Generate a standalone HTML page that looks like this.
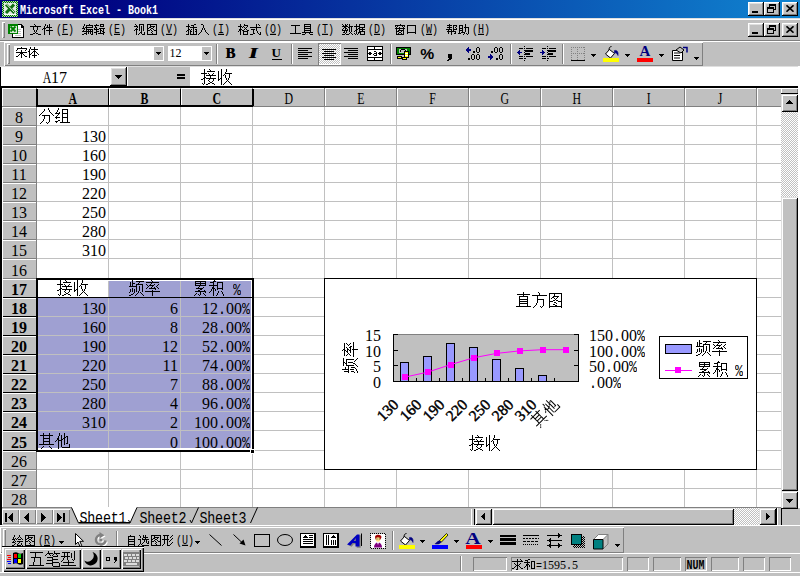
<!DOCTYPE html><html lang="zh"><head><meta charset="utf-8"><title>Microsoft Excel - Book1</title><style>
*{box-sizing:border-box}
html,body{margin:0;padding:0}
body{width:800px;height:576px;overflow:hidden;background:#c0c0c0;position:relative;font-family:"Liberation Sans",sans-serif;color:#000}
div,svg{position:absolute;display:block}
i{font-style:normal}
.n16{font:16px/16px "Liberation Serif",serif;white-space:pre}
.n16 .mc{display:inline-block;width:8px;text-align:center;font:13.333px/16px "Liberation Mono",monospace;transform:scaleY(1.25);transform-origin:50% 78%}
.n16 .sp{display:inline-block;width:8px}
.n12{font:12px/12px "Liberation Serif",serif;white-space:pre}
.n12 .mc{display:inline-block;width:6px;text-align:center;font:10px/12px "Liberation Mono",monospace;transform:scaleY(1.3);transform-origin:50% 78%}
.m16{font:13.333px/16px "Liberation Mono",monospace;transform:scaleY(1.25);transform-origin:0 0;white-space:pre}
.m12{font:10px/12px "Liberation Mono",monospace;transform:scaleY(1.2);transform-origin:0 0;white-space:pre}
.b{font-weight:bold}
.sq{display:inline-block;transform:scaleX(.74)}
.r{text-align:right}.c{text-align:center}
.btn{background:#c0c0c0;box-shadow:inset -1px -1px #000,inset 1px 1px #fff,inset -2px -2px #808080,inset 2px 2px #dfdfdf}
.sb{background:#c0c0c0;box-shadow:inset -1px -1px #000,inset 1px 1px #dfdfdf,inset -2px -2px #808080,inset 2px 2px #fff}
.dith{background:repeating-conic-gradient(#fff 0 25%,#c0c0c0 0 50%) 0 0/2px 2px}
.sunk{box-shadow:inset 1px 1px #808080,inset -1px -1px #fff}
.hl{background:#c0c0c0}
.grip{width:3px;background:#c0c0c0;box-shadow:inset 1px 1px #fff,inset -1px -1px #808080}
.sep{width:2px;background:#808080;border-right:1px solid #fff}
.hd{background:#c0c0c0;box-shadow:inset 1px 1px #fff}
</style></head><body><div style="left:0px;top:0px;width:800px;height:18px;background:linear-gradient(90deg,#000080 0%,#000080 10%,#1084d0 100%)"></div><div class="m12 b" style="left:20px;top:4px;color:#fff;transform:scaleY(1.3)">Microsoft Excel - Book1</div><svg style="left:2px;top:1px;" width="16" height="16" viewBox="0 0 16 16" shape-rendering="crispEdges"><defs><pattern id="gd" width="2" height="2" patternUnits="userSpaceOnUse"><rect width="2" height="2" fill="#b0dcb0"/><rect width="1" height="1" fill="#007000"/><rect x="1" y="1" width="1" height="1" fill="#007000"/></pattern></defs><rect width="16" height="16" fill="url(#gd)"/><rect x="2" y="2" width="12" height="11" fill="#e4ece4"/><rect x="2" y="13" width="12" height="1" fill="#fff"/><g shape-rendering="auto"><path d="M4 3.500l8.500 8.500M12 3.500l-8 8.500" stroke="#107010" stroke-width="3" fill="none"/><path d="M4.500 3l8 8.500" stroke="#fff" stroke-width=".9"/></g></svg><div class="btn" style="left:748px;top:2px;width:16px;height:14px;"></div><div class="btn" style="left:764px;top:2px;width:16px;height:14px;"></div><div class="btn" style="left:782px;top:2px;width:16px;height:14px;"></div><div style="left:752px;top:11px;width:6px;height:2px;background:#000"></div><svg style="left:767px;top:4px" width="10" height="10" shape-rendering="crispEdges"><path fill="none" stroke="#000" d="M2.5 2.5V.5h6v5h-2M.5 3.5h6v5h-6z"/><path d="M2 0h7v2H2zM0 3h7v2H0z" fill="#000"/></svg><svg style="left:786px;top:5px" width="8" height="7"><path stroke="#000" stroke-width="1.6" d="M.5 .3l7 6.4M7.5 .3l-7 6.4"/></svg><div style="left:0px;top:18px;width:800px;height:1px;background:#dfdfdf"></div><div style="left:0px;top:19px;width:800px;height:1px;background:#fff"></div><div style="left:0px;top:40px;width:800px;height:1px;background:#808080"></div><div style="left:0px;top:41px;width:800px;height:1px;background:#fff"></div><div class="grip" style="left:2px;top:22px;width:3px;height:16px;"></div><svg style="left:8px;top:23px;" width="17" height="16" viewBox="0 0 17 16" shape-rendering="crispEdges"><path d="M4 1h9l3 3v11h-12z" fill="#000"/><path d="M4.500 1.500h8v3h2.500v9.500h-10.500z" fill="#fff"/><path d="M12.500 1.500l2.500 3" stroke="#000" fill="none"/><path fill="#c0c0c0" d="M10 6h3v1h-3zM10 8h3v1h-3zM10 10h3v1h-3zM7 12h6v1h-6z"/><rect x="0" y="1" width="10" height="10" fill="#008000"/><rect x="1.500" y="2.500" width="7" height="7" fill="#d8e8d8"/><g shape-rendering="auto"><path d="M2.500 3.500l5 5M7.500 3.500l-5 5" stroke="#008000" stroke-width="1.800" fill="none"/></g></svg><svg role="img" aria-label="文件" style="left:30px;top:24px;" width="24" height="14" viewBox="0 0 24 14" shape-rendering="crispEdges"><title>文件</title><path fill="#000" d="M4 0h1v1h-1zM5 1h1v1h-1zM0 2h11v1h-11zM3 3h1v3h-1zM7 3h1v3h-1zM4 6h1v2h-1zM6 6h1v2h-1zM5 8h1v1h-1zM3 9h2v1h-2zM6 9h2v1h-2zM0 10h3v1h-3zM8 10h3v1h-3zM15 0h1v2h-1zM19 0h1v3h-1zM17 1h1v2h-1zM14 2h1v2h-1zM16 3h6v1h-6zM13 4h3v1h-3zM19 4h1v2h-1zM12 5h1v1h-1zM14 5h1v6h-1zM16 6h7v1h-7zM19 7h1v4h-1z"/></svg><div class="m12" style="left:56px;top:23px">(<u>F</u>)</div><svg role="img" aria-label="编辑" style="left:82px;top:24px;" width="24" height="14" viewBox="0 0 24 14" shape-rendering="crispEdges"><title>编辑</title><path fill="#000" d="M2 0h1v2h-1zM7 0h1v1h-1zM4 1h7v1h-7zM1 2h1v2h-1zM4 2h1v1h-1zM10 2h1v1h-1zM3 3h8v1h-8zM0 4h3v1h-3zM4 4h1v1h-1zM2 5h1v1h-1zM4 5h7v1h-7zM1 6h1v1h-1zM4 6h1v1h-1zM6 6h1v1h-1zM8 6h1v1h-1zM10 6h1v1h-1zM0 7h11v1h-11zM4 8h1v1h-1zM6 8h1v2h-1zM8 8h1v2h-1zM10 8h1v2h-1zM2 9h3v1h-3zM0 10h2v1h-2zM4 10h1v1h-1zM9 10h2v1h-2zM14 0h1v1h-1zM18 0h4v1h-4zM12 1h5v1h-5zM18 1h1v1h-1zM21 1h1v1h-1zM13 2h1v1h-1zM18 2h4v1h-4zM13 3h2v1h-2zM12 4h1v1h-1zM14 4h1v1h-1zM17 4h6v1h-6zM12 5h5v1h-5zM18 5h1v1h-1zM21 5h1v2h-1zM14 6h1v1h-1zM18 6h2v1h-2zM14 7h3v1h-3zM18 7h1v2h-1zM20 7h2v1h-2zM12 8h3v1h-3zM21 8h2v1h-2zM14 9h1v2h-1zM16 9h6v1h-6zM21 10h1v1h-1z"/></svg><div class="m12" style="left:108px;top:23px">(<u>E</u>)</div><svg role="img" aria-label="视图" style="left:134px;top:24px;" width="24" height="14" viewBox="0 0 24 14" shape-rendering="crispEdges"><title>视图</title><path fill="#000" d="M1 0h1v1h-1zM5 0h5v1h-5zM2 1h1v1h-1zM5 1h1v6h-1zM9 1h1v6h-1zM0 2h4v1h-4zM7 2h1v6h-1zM3 3h1v1h-1zM2 4h1v1h-1zM1 5h3v1h-3zM0 6h1v1h-1zM2 6h1v5h-1zM6 8h2v1h-2zM10 8h1v2h-1zM5 9h1v1h-1zM7 9h1v1h-1zM4 10h1v1h-1zM8 10h3v1h-3zM13 0h10v1h-10zM13 1h1v3h-1zM16 1h1v1h-1zM22 1h1v5h-1zM16 2h5v1h-5zM15 3h2v1h-2zM19 3h1v1h-1zM13 4h2v1h-2zM17 4h2v1h-2zM13 5h1v1h-1zM16 5h1v1h-1zM19 5h1v1h-1zM13 6h3v1h-3zM17 6h1v1h-1zM20 6h3v1h-3zM13 7h1v3h-1zM18 7h1v1h-1zM22 7h1v3h-1zM17 8h1v1h-1zM18 9h1v1h-1zM13 10h10v1h-10z"/></svg><div class="m12" style="left:160px;top:23px">(<u>V</u>)</div><svg role="img" aria-label="插入" style="left:186px;top:24px;" width="24" height="14" viewBox="0 0 24 14" shape-rendering="crispEdges"><title>插入</title><path fill="#000" d="M2 0h1v2h-1zM8 0h2v1h-2zM5 1h3v1h-3zM0 2h4v1h-4zM7 2h1v1h-1zM2 3h1v2h-1zM4 3h7v1h-7zM7 4h1v6h-1zM2 5h2v1h-2zM5 5h1v1h-1zM9 5h2v1h-2zM1 6h2v1h-2zM4 6h1v1h-1zM10 6h1v1h-1zM0 7h1v1h-1zM2 7h1v3h-1zM4 7h2v1h-2zM9 7h2v1h-2zM4 8h1v2h-1zM10 8h1v2h-1zM0 10h3v1h-3zM4 10h7v1h-7zM15 0h2v1h-2zM17 1h1v3h-1zM16 4h1v2h-1zM18 4h1v2h-1zM15 6h1v2h-1zM19 6h1v2h-1zM14 8h1v1h-1zM20 8h1v1h-1zM13 9h1v1h-1zM21 9h1v1h-1zM12 10h1v1h-1zM22 10h1v1h-1z"/></svg><div class="m12" style="left:212px;top:23px">(<u>I</u>)</div><svg role="img" aria-label="格式" style="left:238px;top:24px;" width="24" height="14" viewBox="0 0 24 14" shape-rendering="crispEdges"><title>格式</title><path fill="#000" d="M2 0h1v2h-1zM6 0h1v1h-1zM6 1h4v1h-4zM0 2h4v1h-4zM5 2h1v1h-1zM9 2h1v1h-1zM2 3h1v2h-1zM4 3h1v1h-1zM6 3h1v1h-1zM8 3h1v1h-1zM7 4h1v1h-1zM1 5h3v1h-3zM6 5h1v1h-1zM8 5h1v1h-1zM1 6h2v1h-2zM4 6h2v1h-2zM9 6h2v1h-2zM0 7h1v1h-1zM2 7h1v4h-1zM5 7h5v1h-5zM5 8h1v2h-1zM9 8h1v2h-1zM5 10h5v1h-5zM18 0h1v3h-1zM20 0h1v1h-1zM21 1h1v1h-1zM12 3h11v1h-11zM18 4h1v3h-1zM13 5h4v1h-4zM15 6h1v3h-1zM19 7h1v2h-1zM22 8h1v2h-1zM15 9h2v1h-2zM20 9h1v1h-1zM12 10h3v1h-3zM21 10h2v1h-2z"/></svg><div class="m12" style="left:264px;top:23px">(<u>O</u>)</div><svg role="img" aria-label="工具" style="left:290px;top:24px;" width="24" height="14" viewBox="0 0 24 14" shape-rendering="crispEdges"><title>工具</title><path fill="#000" d="M1 1h9v1h-9zM5 2h1v7h-1zM0 9h11v1h-11zM14 0h7v1h-7zM14 1h1v1h-1zM20 1h1v1h-1zM14 2h7v1h-7zM14 3h1v1h-1zM20 3h1v1h-1zM14 4h7v1h-7zM14 5h1v1h-1zM20 5h1v1h-1zM14 6h7v1h-7zM14 7h1v1h-1zM20 7h1v1h-1zM12 8h11v1h-11zM15 9h1v1h-1zM19 9h1v1h-1zM12 10h3v1h-3zM20 10h3v1h-3z"/></svg><div class="m12" style="left:316px;top:23px">(<u>T</u>)</div><svg role="img" aria-label="数据" style="left:342px;top:24px;" width="24" height="14" viewBox="0 0 24 14" shape-rendering="crispEdges"><title>数据</title><path fill="#000" d="M0 0h1v1h-1zM3 0h1v1h-1zM5 0h1v1h-1zM7 0h1v2h-1zM1 1h1v1h-1zM3 1h2v1h-2zM0 2h6v1h-6zM7 2h4v1h-4zM2 3h2v1h-2zM6 3h2v1h-2zM9 3h1v5h-1zM1 4h1v1h-1zM3 4h2v1h-2zM7 4h1v4h-1zM0 5h1v1h-1zM3 5h1v1h-1zM5 5h1v1h-1zM0 6h6v1h-6zM2 7h1v1h-1zM4 7h1v2h-1zM1 8h2v1h-2zM8 8h1v1h-1zM3 9h1v1h-1zM7 9h1v1h-1zM9 9h1v1h-1zM0 10h3v1h-3zM4 10h3v1h-3zM10 10h1v1h-1zM14 0h1v2h-1zM17 0h6v1h-6zM17 1h1v1h-1zM22 1h1v2h-1zM12 2h6v1h-6zM14 3h1v2h-1zM17 3h6v1h-6zM16 4h2v1h-2zM20 4h1v1h-1zM14 5h2v1h-2zM17 5h6v1h-6zM13 6h2v1h-2zM17 6h1v1h-1zM20 6h1v1h-1zM12 7h1v1h-1zM14 7h1v3h-1zM17 7h6v1h-6zM16 8h3v1h-3zM22 8h1v2h-1zM12 9h1v1h-1zM16 9h1v1h-1zM18 9h1v1h-1zM13 10h1v1h-1zM15 10h1v1h-1zM18 10h5v1h-5z"/></svg><div class="m12" style="left:368px;top:23px">(<u>D</u>)</div><svg role="img" aria-label="窗口" style="left:394px;top:24px;" width="24" height="14" viewBox="0 0 24 14" shape-rendering="crispEdges"><title>窗口</title><path fill="#000" d="M6 0h1v1h-1zM1 1h10v1h-10zM1 2h1v1h-1zM3 2h1v1h-1zM8 2h1v1h-1zM10 2h1v1h-1zM2 3h1v1h-1zM5 3h1v1h-1zM9 3h1v1h-1zM1 4h10v1h-10zM2 5h1v2h-1zM5 5h1v1h-1zM9 5h1v1h-1zM4 6h6v1h-6zM2 7h3v1h-3zM7 7h1v1h-1zM9 7h1v3h-1zM2 8h1v2h-1zM5 8h2v1h-2zM4 9h1v1h-1zM7 9h1v1h-1zM2 10h8v1h-8zM13 1h9v1h-9zM13 2h1v6h-1zM21 2h1v6h-1zM13 8h9v1h-9zM13 9h1v1h-1zM21 9h1v1h-1z"/></svg><div class="m12" style="left:420px;top:23px">(<u>W</u>)</div><svg role="img" aria-label="帮助" style="left:446px;top:24px;" width="24" height="14" viewBox="0 0 24 14" shape-rendering="crispEdges"><title>帮助</title><path fill="#000" d="M3 0h1v1h-1zM1 1h5v1h-5zM7 1h4v1h-4zM3 2h1v1h-1zM7 2h1v3h-1zM10 2h1v1h-1zM1 3h5v1h-5zM9 3h1v1h-1zM3 4h1v1h-1zM10 4h1v1h-1zM0 5h6v1h-6zM7 5h4v1h-4zM2 6h1v1h-1zM5 6h1v1h-1zM7 6h1v1h-1zM1 7h9v1h-9zM2 8h1v2h-1zM5 8h1v3h-1zM9 8h1v1h-1zM8 9h2v1h-2zM19 0h1v3h-1zM13 1h4v1h-4zM13 2h1v2h-1zM16 2h1v2h-1zM18 3h5v1h-5zM13 4h4v1h-4zM19 4h1v4h-1zM22 4h1v6h-1zM13 5h1v1h-1zM16 5h1v1h-1zM13 6h4v1h-4zM13 7h1v2h-1zM16 7h1v1h-1zM15 8h4v1h-4zM12 9h3v1h-3zM18 9h1v1h-1zM20 9h1v1h-1zM17 10h1v1h-1zM21 10h1v1h-1z"/></svg><div class="m12" style="left:472px;top:23px">(<u>H</u>)</div><div class="btn" style="left:748px;top:23px;width:16px;height:14px;"></div><div class="btn" style="left:764px;top:23px;width:16px;height:14px;"></div><div class="btn" style="left:782px;top:23px;width:16px;height:14px;"></div><div style="left:752px;top:32px;width:6px;height:2px;background:#000"></div><svg style="left:767px;top:25px" width="10" height="10" shape-rendering="crispEdges"><path fill="none" stroke="#000" d="M2.5 2.5V.5h6v5h-2M.5 3.5h6v5h-6z"/><path d="M2 0h7v2H2zM0 3h7v2H0z" fill="#000"/></svg><svg style="left:786px;top:26px" width="8" height="7"><path stroke="#000" stroke-width="1.6" d="M.5 .3l7 6.4M7.5 .3l-7 6.4"/></svg><div style="left:4px;top:42px;width:699px;height:24px;background:#c0c0c0;box-shadow:inset 1px 1px #fff,inset -1px -1px #808080"></div><div class="grip" style="left:7px;top:44px;width:3px;height:20px;"></div><div style="left:14px;top:46px;width:150px;height:15px;background:#fff"></div><div style="left:154px;top:47px;width:9px;height:13px;background:#c0c0c0"></div><svg style="left:156px;top:52px;" width="5" height="3" viewBox="0 0 5 3" shape-rendering="crispEdges"><path fill="#000" d="M0 0h5v1h-5zM1 1h3v1h-3zM2 2h1v1h-1z"/></svg><svg role="img" aria-label="宋体" style="left:16px;top:47px;" width="24" height="14" viewBox="0 0 24 14" shape-rendering="crispEdges"><title>宋体</title><path fill="#000" d="M5 0h1v1h-1zM1 1h10v1h-10zM1 2h1v1h-1zM10 2h1v1h-1zM0 3h1v1h-1zM5 3h1v2h-1zM9 3h1v1h-1zM0 5h11v1h-11zM4 6h3v1h-3zM3 7h1v1h-1zM5 7h1v4h-1zM7 7h1v1h-1zM2 8h1v1h-1zM8 8h1v1h-1zM0 9h2v1h-2zM9 9h2v1h-2zM14 0h1v2h-1zM18 0h1v2h-1zM13 2h1v2h-1zM15 2h7v1h-7zM18 3h1v1h-1zM12 4h2v1h-2zM17 4h3v1h-3zM13 5h1v2h-1zM16 5h1v1h-1zM18 5h1v3h-1zM20 5h1v1h-1zM15 6h1v1h-1zM21 6h1v1h-1zM13 7h2v1h-2zM22 7h1v1h-1zM13 8h1v3h-1zM16 8h5v1h-5zM18 9h1v2h-1z"/></svg><div style="left:168px;top:46px;width:44px;height:15px;background:#fff"></div><div style="left:202px;top:47px;width:9px;height:13px;background:#c0c0c0"></div><svg style="left:204px;top:52px;" width="5" height="3" viewBox="0 0 5 3" shape-rendering="crispEdges"><path fill="#000" d="M0 0h5v1h-5zM1 1h3v1h-3zM2 2h1v1h-1z"/></svg><div class="n12" style="left:169.500px;top:47px">12</div><div style="left:216px;top:44px;width:1px;height:20px;background:#808080"></div><div style="left:217px;top:44px;width:1px;height:20px;background:#fff"></div><div style="left:225.5px;top:45px;font:bold 14.5px/16px 'Liberation Serif',serif;text-shadow:.6px 0 #000">B</div><div style="left:250px;top:45px;font:italic bold 14.5px/16px 'Liberation Serif',serif;text-shadow:.8px 0 #000;transform:scaleX(1.4)">I</div><div style="left:271.5px;top:45px;font:bold 13px/16px 'Liberation Serif',serif">U</div><div style="left:272px;top:59px;width:10px;height:1px;background:#000"></div><div style="left:291px;top:44px;width:1px;height:20px;background:#808080"></div><div style="left:292px;top:44px;width:1px;height:20px;background:#fff"></div><svg style="left:298px;top:48px;" width="14" height="11" viewBox="0 0 14 11" shape-rendering="crispEdges"><path fill="#000" d="M0 0h14v1h-14zM0 2h10v1h-10zM0 4h14v1h-14zM0 6h10v1h-10zM0 8h14v1h-14zM0 10h10v1h-10z"/></svg><div class="dith" style="left:318px;top:43px;width:23px;height:22px;box-shadow:inset 1px 1px #808080,inset -1px -1px #fff"></div><svg style="left:322px;top:49px;" width="14" height="11" viewBox="0 0 14 11" shape-rendering="crispEdges"><path fill="#000" d="M0 0h14v1h-14zM2 2h10v1h-10zM0 4h14v1h-14zM2 6h10v1h-10zM0 8h14v1h-14zM2 10h10v1h-10z"/></svg><svg style="left:344px;top:48px;" width="14" height="11" viewBox="0 0 14 11" shape-rendering="crispEdges"><path fill="#000" d="M0 0h14v1h-14zM4 2h10v1h-10zM0 4h14v1h-14zM4 6h10v1h-10zM0 8h14v1h-14zM4 10h10v1h-10z"/></svg><svg style="left:367px;top:46px;" width="16" height="15" viewBox="0 0 16 15" shape-rendering="crispEdges"><rect width="16" height="15" fill="#000"/><path fill="#fff" d="M1 1h6v2h-6zM8 1h7v2h-7zM1 4h14v7h-14zM1 12h6v2h-6zM8 12h7v2h-7z"/><path fill="#000" d="M1 7h4v1h-4zM2 6h2v3h-2zM11 7h4v1h-4zM12 6h2v3h-2zM7 5h2v1h-2zM9 6h1v4h-1zM7 7h2v1h-2zM6 8h1v1h-1zM7 9h2v1h-2z"/></svg><div style="left:390px;top:44px;width:1px;height:20px;background:#808080"></div><div style="left:391px;top:44px;width:1px;height:20px;background:#fff"></div><svg style="left:396px;top:47px;" width="16" height="13" viewBox="0 0 16 13" shape-rendering="crispEdges"><rect x="0" y="0" width="15" height="8" fill="#000"/><rect x="1" y="1" width="13" height="6" fill="#008000"/><rect x="3" y="2" width="8" height="4" fill="#c0c0c0"/><rect x="5" y="2" width="4" height="1" fill="#000"/><rect x="4" y="3" width="1" height="2" fill="#000"/><rect x="9" y="3" width="1" height="1" fill="#000"/><rect x="8" y="4" width="5" height="7" fill="#000"/><rect x="9" y="5" width="3" height="5" fill="#ff0"/><rect x="9" y="6" width="3" height="1" fill="#fff"/><rect x="9" y="8" width="3" height="1" fill="#fff"/><rect x="1" y="9" width="5" height="3" fill="#000"/><rect x="2" y="10" width="3" height="1" fill="#ff0"/><rect x="6" y="10" width="5" height="3" fill="#000"/><rect x="7" y="11" width="3" height="1" fill="#ff0"/></svg><div style="left:421px;top:46px;font:bold 14px/16px 'Liberation Sans',sans-serif;transform:scaleX(1.12)">%</div><svg style="left:447px;top:54px;" width="5" height="7" viewBox="0 0 5 7" shape-rendering="crispEdges"><path fill="#000" d="M1 0h4v4h-4zM2 4h3v1h-3zM1 5h3v1h-3zM0 6h2v1h-2z"/></svg><svg style="left:466px;top:47px;" width="16" height="13" viewBox="0 0 16 13" shape-rendering="crispEdges"><path fill="#000080" d="M0 2h5v2h-5zM1 1h2v4h-2zM2 0h1v6h-1z"/><path fill="#000" d="M7 4h2v2h-2zM11 0h2v1h-2zM11 5h2v1h-2zM10 1h1v4h-1zM13 1h1v4h-1z"/><path fill="#000" d="M2 11h2v2h-2zM6 7h2v1h-2zM6 12h2v1h-2zM5 8h1v4h-1zM8 8h1v4h-1zM11 7h2v1h-2zM11 12h2v1h-2zM10 8h1v4h-1zM13 8h1v4h-1z"/></svg><svg style="left:488px;top:47px;" width="16" height="13" viewBox="0 0 16 13" shape-rendering="crispEdges"><path fill="#000" d="M3 4h2v2h-2zM7 0h2v1h-2zM7 5h2v1h-2zM6 1h1v4h-1zM9 1h1v4h-1zM12 0h2v1h-2zM12 5h2v1h-2zM11 1h1v4h-1zM14 1h1v4h-1z"/><g transform="translate(0,7)"><path fill="#000080" d="M0 2h5v2h-5zM2 1h2v4h-2zM2 0h1v6h-1z"/></g><path fill="#000" d="M8 11h2v2h-2zM12 7h2v1h-2zM12 12h2v1h-2zM11 8h1v4h-1zM14 8h1v4h-1z"/></svg><div style="left:510px;top:44px;width:1px;height:20px;background:#808080"></div><div style="left:511px;top:44px;width:1px;height:20px;background:#fff"></div><svg style="left:517px;top:46px;" width="17" height="16" viewBox="0 0 17 16" shape-rendering="crispEdges"><path fill="#000" d="M2 2h4v1h-4zM9 2h7v1h-7zM8 4h8v2h-8zM8 7h5v2h-5zM2 10h4v1h-4zM9 10h7v1h-7zM2 12h4v1h-4zM8 12h1v1h-1z"/><path fill="#000" d="M7 0h1v1h-1zM7 2h1v1h-1zM7 4h1v1h-1zM7 6h1v1h-1zM7 8h1v1h-1zM7 10h1v1h-1zM7 12h1v1h-1zM7 14h1v1h-1z"/><g transform="translate(0,4)"><path fill="#000080" d="M2 0h1v5h-1zM1 1h1v3h-1zM0 2h5v1h-5z"/></g></svg><svg style="left:540px;top:46px;" width="17" height="16" viewBox="0 0 17 16" shape-rendering="crispEdges"><path fill="#000" d="M2 2h4v1h-4zM9 2h7v1h-7zM8 4h8v2h-8zM8 7h5v2h-5zM2 10h4v1h-4zM9 10h7v1h-7zM2 12h4v1h-4zM8 12h1v1h-1z"/><path fill="#000" d="M7 0h1v1h-1zM7 2h1v1h-1zM7 4h1v1h-1zM7 6h1v1h-1zM7 8h1v1h-1zM7 10h1v1h-1zM7 12h1v1h-1zM7 14h1v1h-1z"/><g transform="translate(0,4)"><path fill="#000080" d="M2 0h1v5h-1zM3 1h1v3h-1zM0 2h5v1h-5z"/></g></svg><div style="left:562px;top:44px;width:1px;height:20px;background:#808080"></div><div style="left:563px;top:44px;width:1px;height:20px;background:#fff"></div><svg style="left:571px;top:47px;" width="14" height="14" viewBox="0 0 14 14" shape-rendering="crispEdges"><path fill="#808080" d="M0 0h1v1h-1zM2 0h1v1h-1zM4 0h1v1h-1zM6 0h1v1h-1zM8 0h1v1h-1zM10 0h1v1h-1zM12 0h1v1h-1zM0 6h1v1h-1zM2 6h1v1h-1zM4 6h1v1h-1zM6 6h1v1h-1zM8 6h1v1h-1zM10 6h1v1h-1zM12 6h1v1h-1zM0 0h1v1h-1zM0 2h1v1h-1zM0 4h1v1h-1zM0 6h1v1h-1zM0 8h1v1h-1zM0 10h1v1h-1zM0 12h1v1h-1zM6 0h1v1h-1zM6 2h1v1h-1zM6 4h1v1h-1zM6 6h1v1h-1zM6 8h1v1h-1zM6 10h1v1h-1zM6 12h1v1h-1zM13 0h1v1h-1zM13 2h1v1h-1zM13 4h1v1h-1zM13 6h1v1h-1zM13 8h1v1h-1zM13 10h1v1h-1zM13 12h1v1h-1z"/><path fill="#000" d="M0 13h14v1h-14z"/></svg><svg style="left:591px;top:54px;" width="5" height="3" viewBox="0 0 5 3" shape-rendering="crispEdges"><path fill="#000" d="M0 0h5v1h-5zM1 1h3v1h-3zM2 2h1v1h-1z"/></svg><svg style="left:604px;top:46px;" width="16" height="12" viewBox="0 0 16 12"><path d="M5.5 3.5l5 4-4 4.5-5-4z" fill="#fff" stroke="#000"/><path d="M7.5 .5c-2 0-2.500 2-2.500 3.500" fill="none" stroke="#000"/><path d="M10.5 4.500c2.500-.5 4 1 3.500 5-1-2-2-3-3.500-2.500z" fill="#000080" stroke="#000080" stroke-width=".6"/></svg><div style="left:603px;top:58px;width:16px;height:4px;background:#ff0"></div><svg style="left:625px;top:54px;" width="5" height="3" viewBox="0 0 5 3" shape-rendering="crispEdges"><path fill="#000" d="M0 0h5v1h-5zM1 1h3v1h-3zM2 2h1v1h-1z"/></svg><div style="left:637px;top:43px;width:16px;text-align:center;color:#000080;font:bold 15px/16px 'Liberation Serif',serif">A</div><div style="left:637px;top:58px;width:16px;height:4px;background:#f00"></div><svg style="left:659px;top:54px;" width="5" height="3" viewBox="0 0 5 3" shape-rendering="crispEdges"><path fill="#000" d="M0 0h5v1h-5zM1 1h3v1h-3zM2 2h1v1h-1z"/></svg><svg style="left:671px;top:46px;" width="18" height="15" viewBox="0 0 18 15"><path d="M1.500 4.500h10v10h-10z" fill="#fff" stroke="#000"/><path d="M3 7h6M3 9.500h6M3 12h6" stroke="#000"/><path d="M5 4l4-3 4 3-3 3z" fill="#c0c0c0" stroke="#000"/><path d="M12 1.500h4v5" fill="none" stroke="#000080" stroke-width="1.500"/></svg><svg style="left:694px;top:57px;" width="5" height="3" viewBox="0 0 5 3" shape-rendering="crispEdges"><path fill="#000" d="M0 0h5v1h-5zM1 1h3v1h-3zM2 2h1v1h-1z"/></svg><div style="left:0px;top:66px;width:800px;height:1px;background:#dfdfdf"></div><div style="left:0px;top:67px;width:800px;height:19px;background:#fff"></div><div style="left:0px;top:67px;width:1px;height:19px;background:#000"></div><div class="btn" style="left:110px;top:67px;width:17px;height:19px;"></div><svg style="left:115px;top:75px;" width="7" height="4" viewBox="0 0 7 4" shape-rendering="crispEdges"><path fill="#000" d="M0 0h7v1h-7zM1 1h5v1h-5zM2 2h3v1h-3zM3 3h1v1h-1z"/></svg><div style="left:127px;top:67px;width:63px;height:19px;background:#c0c0c0"></div><div style="left:127px;top:67px;width:1px;height:19px;background:#fff"></div><div style="left:177px;top:74px;width:8px;height:2px;background:#000"></div><div style="left:177px;top:77px;width:8px;height:2px;background:#000"></div><div class="n16" style="left:41px;top:70px"><i class="sq" style="width:12px;text-align:center;margin-right:-2px">A</i>17</div><svg role="img" aria-label="接收" style="left:201px;top:69px;" width="32" height="18" viewBox="0 0 32 18" shape-rendering="crispEdges"><title>接收</title><path fill="#000" d="M3 0h1v4h-1zM8 0h1v1h-1zM9 1h1v1h-1zM6 2h8v1h-8zM0 4h6v1h-6zM7 4h1v1h-1zM12 4h1v1h-1zM3 5h1v3h-1zM8 5h1v1h-1zM11 5h1v1h-1zM5 6h10v1h-10zM9 7h1v2h-1zM3 8h2v1h-2zM2 9h2v1h-2zM5 9h10v1h-10zM0 10h2v1h-2zM3 10h1v5h-1zM8 10h1v1h-1zM12 10h1v2h-1zM7 11h1v1h-1zM8 12h1v1h-1zM11 12h1v1h-1zM9 13h2v1h-2zM1 14h1v1h-1zM7 14h2v1h-2zM11 14h2v1h-2zM2 15h1v1h-1zM5 15h2v1h-2zM13 15h1v1h-1zM20 0h1v9h-1zM25 0h1v3h-1zM17 2h1v8h-1zM24 3h1v1h-1zM24 4h7v1h-7zM23 5h1v1h-1zM28 5h1v4h-1zM22 6h1v1h-1zM24 6h1v3h-1zM19 9h2v1h-2zM25 9h1v2h-1zM27 9h1v2h-1zM17 10h2v1h-2zM20 10h1v6h-1zM17 11h1v1h-1zM26 11h1v1h-1zM25 12h1v1h-1zM27 12h1v1h-1zM24 13h1v1h-1zM28 13h1v1h-1zM23 14h1v1h-1zM29 14h1v1h-1zM22 15h1v1h-1zM30 15h1v1h-1z"/></svg><div style="left:0px;top:86px;width:800px;height:2px;background:#000"></div><div style="left:0px;top:88px;width:2px;height:437px;background:#000"></div><div style="left:2px;top:88px;width:779px;height:419px;background:#fff"></div><div style="left:37px;top:125px;width:744px;height:1px;background:#c0c0c0"></div><div style="left:37px;top:144px;width:744px;height:1px;background:#c0c0c0"></div><div style="left:37px;top:163px;width:744px;height:1px;background:#c0c0c0"></div><div style="left:37px;top:182px;width:744px;height:1px;background:#c0c0c0"></div><div style="left:37px;top:201px;width:744px;height:1px;background:#c0c0c0"></div><div style="left:37px;top:220px;width:744px;height:1px;background:#c0c0c0"></div><div style="left:37px;top:239px;width:744px;height:1px;background:#c0c0c0"></div><div style="left:37px;top:258px;width:744px;height:1px;background:#c0c0c0"></div><div style="left:37px;top:278px;width:744px;height:1px;background:#c0c0c0"></div><div style="left:37px;top:297px;width:744px;height:1px;background:#c0c0c0"></div><div style="left:37px;top:316px;width:744px;height:1px;background:#c0c0c0"></div><div style="left:37px;top:335px;width:744px;height:1px;background:#c0c0c0"></div><div style="left:37px;top:354px;width:744px;height:1px;background:#c0c0c0"></div><div style="left:37px;top:373px;width:744px;height:1px;background:#c0c0c0"></div><div style="left:37px;top:392px;width:744px;height:1px;background:#c0c0c0"></div><div style="left:37px;top:411px;width:744px;height:1px;background:#c0c0c0"></div><div style="left:37px;top:430px;width:744px;height:1px;background:#c0c0c0"></div><div style="left:37px;top:450px;width:744px;height:1px;background:#c0c0c0"></div><div style="left:37px;top:469px;width:744px;height:1px;background:#c0c0c0"></div><div style="left:37px;top:488px;width:744px;height:1px;background:#c0c0c0"></div><div style="left:108px;top:107px;width:1px;height:400px;background:#c0c0c0"></div><div style="left:180px;top:107px;width:1px;height:400px;background:#c0c0c0"></div><div style="left:252px;top:107px;width:1px;height:400px;background:#c0c0c0"></div><div style="left:324px;top:107px;width:1px;height:400px;background:#c0c0c0"></div><div style="left:396px;top:107px;width:1px;height:400px;background:#c0c0c0"></div><div style="left:468px;top:107px;width:1px;height:400px;background:#c0c0c0"></div><div style="left:540px;top:107px;width:1px;height:400px;background:#c0c0c0"></div><div style="left:612px;top:107px;width:1px;height:400px;background:#c0c0c0"></div><div style="left:684px;top:107px;width:1px;height:400px;background:#c0c0c0"></div><div style="left:756px;top:107px;width:1px;height:400px;background:#c0c0c0"></div><div style="left:2px;top:88px;width:779px;height:18px;background:#c0c0c0"></div><div style="left:2px;top:88px;width:779px;height:1px;background:#fff"></div><div style="left:2px;top:106px;width:779px;height:1px;background:#808080"></div><div style="left:2px;top:88px;width:1px;height:18px;background:#fff"></div><div style="left:36px;top:88px;width:1px;height:18px;background:#808080"></div><div style="left:37px;top:88px;width:1px;height:18px;background:#fff"></div><div style="left:108px;top:88px;width:1px;height:18px;background:#808080"></div><div style="left:109px;top:88px;width:1px;height:18px;background:#fff"></div><div style="left:180px;top:88px;width:1px;height:18px;background:#808080"></div><div style="left:181px;top:88px;width:1px;height:18px;background:#fff"></div><div style="left:252px;top:88px;width:1px;height:18px;background:#808080"></div><div style="left:253px;top:88px;width:1px;height:18px;background:#fff"></div><div style="left:324px;top:88px;width:1px;height:18px;background:#808080"></div><div style="left:325px;top:88px;width:1px;height:18px;background:#fff"></div><div style="left:396px;top:88px;width:1px;height:18px;background:#808080"></div><div style="left:397px;top:88px;width:1px;height:18px;background:#fff"></div><div style="left:468px;top:88px;width:1px;height:18px;background:#808080"></div><div style="left:469px;top:88px;width:1px;height:18px;background:#fff"></div><div style="left:540px;top:88px;width:1px;height:18px;background:#808080"></div><div style="left:541px;top:88px;width:1px;height:18px;background:#fff"></div><div style="left:612px;top:88px;width:1px;height:18px;background:#808080"></div><div style="left:613px;top:88px;width:1px;height:18px;background:#fff"></div><div style="left:684px;top:88px;width:1px;height:18px;background:#808080"></div><div style="left:685px;top:88px;width:1px;height:18px;background:#fff"></div><div style="left:756px;top:88px;width:1px;height:18px;background:#808080"></div><div style="left:757px;top:88px;width:1px;height:18px;background:#fff"></div><div class="n16 c b" style="left:37px;top:91px;width:71px"><i class="sq">A</i></div><div class="n16 c b" style="left:109px;top:91px;width:71px"><i class="sq">B</i></div><div class="n16 c b" style="left:181px;top:91px;width:71px"><i class="sq">C</i></div><div class="n16 c" style="left:253px;top:91px;width:71px"><i class="sq">D</i></div><div class="n16 c" style="left:325px;top:91px;width:71px"><i class="sq">E</i></div><div class="n16 c" style="left:397px;top:91px;width:71px"><i class="sq">F</i></div><div class="n16 c" style="left:469px;top:91px;width:71px"><i class="sq">G</i></div><div class="n16 c" style="left:541px;top:91px;width:71px"><i class="sq">H</i></div><div class="n16 c" style="left:613px;top:91px;width:71px"><i class="sq">I</i></div><div class="n16 c" style="left:685px;top:91px;width:71px"><i class="sq">J</i></div><div style="left:36px;top:105px;width:217px;height:2px;background:#000"></div><div style="left:36px;top:89px;width:2px;height:17px;background:#000"></div><div style="left:108px;top:89px;width:1px;height:17px;background:#000"></div><div style="left:180px;top:89px;width:1px;height:17px;background:#000"></div><div style="left:252px;top:89px;width:2px;height:17px;background:#000"></div><div style="left:2px;top:107px;width:34px;height:400px;background:#c0c0c0"></div><div style="left:36px;top:107px;width:1px;height:400px;background:#808080"></div><div style="left:2px;top:107px;width:34px;height:1px;background:#fff"></div><div style="left:2px;top:125px;width:34px;height:1px;background:#808080"></div><div class="n16 c" style="left:2px;top:110px;width:34px">8</div><div style="left:2px;top:126px;width:34px;height:1px;background:#fff"></div><div style="left:2px;top:144px;width:34px;height:1px;background:#808080"></div><div class="n16 c" style="left:2px;top:129px;width:34px">9</div><div style="left:2px;top:145px;width:34px;height:1px;background:#fff"></div><div style="left:2px;top:163px;width:34px;height:1px;background:#808080"></div><div class="n16 c" style="left:2px;top:148px;width:34px">10</div><div style="left:2px;top:164px;width:34px;height:1px;background:#fff"></div><div style="left:2px;top:182px;width:34px;height:1px;background:#808080"></div><div class="n16 c" style="left:2px;top:167px;width:34px">11</div><div style="left:2px;top:183px;width:34px;height:1px;background:#fff"></div><div style="left:2px;top:201px;width:34px;height:1px;background:#808080"></div><div class="n16 c" style="left:2px;top:186px;width:34px">12</div><div style="left:2px;top:202px;width:34px;height:1px;background:#fff"></div><div style="left:2px;top:220px;width:34px;height:1px;background:#808080"></div><div class="n16 c" style="left:2px;top:205px;width:34px">13</div><div style="left:2px;top:221px;width:34px;height:1px;background:#fff"></div><div style="left:2px;top:239px;width:34px;height:1px;background:#808080"></div><div class="n16 c" style="left:2px;top:224px;width:34px">14</div><div style="left:2px;top:240px;width:34px;height:1px;background:#fff"></div><div style="left:2px;top:258px;width:34px;height:1px;background:#808080"></div><div class="n16 c" style="left:2px;top:243px;width:34px">15</div><div style="left:2px;top:259px;width:34px;height:1px;background:#fff"></div><div style="left:2px;top:278px;width:34px;height:1px;background:#808080"></div><div class="n16 c" style="left:2px;top:263px;width:34px">16</div><div style="left:2px;top:279px;width:34px;height:1px;background:#fff"></div><div style="left:2px;top:297px;width:34px;height:1px;background:#000"></div><div class="n16 c b" style="left:2px;top:282px;width:34px">17</div><div style="left:2px;top:298px;width:34px;height:1px;background:#fff"></div><div style="left:2px;top:316px;width:34px;height:1px;background:#000"></div><div class="n16 c b" style="left:2px;top:301px;width:34px">18</div><div style="left:2px;top:317px;width:34px;height:1px;background:#fff"></div><div style="left:2px;top:335px;width:34px;height:1px;background:#000"></div><div class="n16 c b" style="left:2px;top:320px;width:34px">19</div><div style="left:2px;top:336px;width:34px;height:1px;background:#fff"></div><div style="left:2px;top:354px;width:34px;height:1px;background:#000"></div><div class="n16 c b" style="left:2px;top:339px;width:34px">20</div><div style="left:2px;top:355px;width:34px;height:1px;background:#fff"></div><div style="left:2px;top:373px;width:34px;height:1px;background:#000"></div><div class="n16 c b" style="left:2px;top:358px;width:34px">21</div><div style="left:2px;top:374px;width:34px;height:1px;background:#fff"></div><div style="left:2px;top:392px;width:34px;height:1px;background:#000"></div><div class="n16 c b" style="left:2px;top:377px;width:34px">22</div><div style="left:2px;top:393px;width:34px;height:1px;background:#fff"></div><div style="left:2px;top:411px;width:34px;height:1px;background:#000"></div><div class="n16 c b" style="left:2px;top:396px;width:34px">23</div><div style="left:2px;top:412px;width:34px;height:1px;background:#fff"></div><div style="left:2px;top:430px;width:34px;height:1px;background:#000"></div><div class="n16 c b" style="left:2px;top:415px;width:34px">24</div><div style="left:2px;top:431px;width:34px;height:1px;background:#fff"></div><div style="left:2px;top:450px;width:34px;height:1px;background:#000"></div><div class="n16 c b" style="left:2px;top:435px;width:34px">25</div><div style="left:2px;top:451px;width:34px;height:1px;background:#fff"></div><div style="left:2px;top:469px;width:34px;height:1px;background:#808080"></div><div class="n16 c" style="left:2px;top:454px;width:34px">26</div><div style="left:2px;top:470px;width:34px;height:1px;background:#fff"></div><div style="left:2px;top:488px;width:34px;height:1px;background:#808080"></div><div class="n16 c" style="left:2px;top:473px;width:34px">27</div><div style="left:2px;top:489px;width:34px;height:1px;background:#fff"></div><div style="left:2px;top:507px;width:34px;height:1px;background:#808080"></div><div class="n16 c" style="left:2px;top:492px;width:34px">28</div><div style="left:2px;top:107px;width:1px;height:400px;background:#fff"></div><div style="left:2px;top:507px;width:779px;height:1px;background:#808080"></div><svg role="img" aria-label="分组" style="left:39px;top:108px;" width="32" height="18" viewBox="0 0 32 18" shape-rendering="crispEdges"><title>分组</title><path fill="#000" d="M9 0h1v2h-1zM5 1h1v2h-1zM10 2h1v2h-1zM4 3h1v1h-1zM3 4h1v1h-1zM11 4h1v1h-1zM2 5h1v1h-1zM12 5h1v1h-1zM1 6h1v1h-1zM13 6h1v1h-1zM0 7h1v1h-1zM3 7h8v1h-8zM14 7h1v1h-1zM5 8h1v3h-1zM10 8h1v6h-1zM4 11h1v2h-1zM3 13h1v1h-1zM2 14h1v1h-1zM7 14h1v1h-1zM9 14h1v1h-1zM1 15h1v1h-1zM8 15h1v1h-1zM19 0h1v2h-1zM23 1h6v1h-6zM18 2h1v2h-1zM23 2h1v3h-1zM28 2h1v3h-1zM17 4h1v1h-1zM20 4h1v1h-1zM16 5h5v1h-5zM23 5h6v1h-6zM19 6h1v1h-1zM23 6h1v3h-1zM28 6h1v3h-1zM18 7h1v1h-1zM17 8h1v1h-1zM16 9h5v1h-5zM23 9h6v1h-6zM17 10h1v1h-1zM23 10h1v4h-1zM28 10h1v4h-1zM19 12h2v1h-2zM16 13h3v1h-3zM17 14h1v1h-1zM21 14h10v1h-10z"/></svg><div class="n16 r" style="left:37px;top:129px;width:69px">130</div><div class="n16 r" style="left:37px;top:148px;width:69px">160</div><div class="n16 r" style="left:37px;top:167px;width:69px">190</div><div class="n16 r" style="left:37px;top:186px;width:69px">220</div><div class="n16 r" style="left:37px;top:205px;width:69px">250</div><div class="n16 r" style="left:37px;top:224px;width:69px">280</div><div class="n16 r" style="left:37px;top:243px;width:69px">310</div><div style="left:38px;top:281px;width:213px;height:167px;background:#9fa0d2"></div><div style="left:38px;top:281px;width:70px;height:16px;background:#fff"></div><div style="left:38px;top:297px;width:213px;height:1px;background:#c0c0c0"></div><div style="left:38px;top:316px;width:213px;height:1px;background:#c0c0c0"></div><div style="left:38px;top:335px;width:213px;height:1px;background:#c0c0c0"></div><div style="left:38px;top:354px;width:213px;height:1px;background:#c0c0c0"></div><div style="left:38px;top:373px;width:213px;height:1px;background:#c0c0c0"></div><div style="left:38px;top:392px;width:213px;height:1px;background:#c0c0c0"></div><div style="left:38px;top:411px;width:213px;height:1px;background:#c0c0c0"></div><div style="left:38px;top:430px;width:213px;height:1px;background:#c0c0c0"></div><div style="left:108px;top:281px;width:1px;height:167px;background:#c0c0c0"></div><div style="left:180px;top:281px;width:1px;height:167px;background:#c0c0c0"></div><div style="left:38px;top:297px;width:213px;height:1px;background:#000"></div><div style="left:36px;top:278px;width:218px;height:2px;background:#000"></div><div style="left:36px;top:278px;width:2px;height:173px;background:#000"></div><div style="left:252px;top:278px;width:2px;height:171px;background:#000"></div><div style="left:36px;top:450px;width:214px;height:2px;background:#000"></div><div style="left:38px;top:280px;width:213px;height:1px;background:#fff"></div><div style="left:38px;top:448px;width:214px;height:2px;background:#fff"></div><div style="left:251px;top:280px;width:1px;height:170px;background:#fff"></div><div style="left:38px;top:297px;width:214px;height:1px;background:#000"></div><div style="left:250px;top:449px;width:5px;height:5px;background:#000;border:1px solid #fff"></div><svg role="img" aria-label="接收" style="left:57px;top:280px;" width="32" height="18" viewBox="0 0 32 18" shape-rendering="crispEdges"><title>接收</title><path fill="#000" d="M3 0h1v4h-1zM8 0h1v1h-1zM9 1h1v1h-1zM6 2h8v1h-8zM0 4h6v1h-6zM7 4h1v1h-1zM12 4h1v1h-1zM3 5h1v3h-1zM8 5h1v1h-1zM11 5h1v1h-1zM5 6h10v1h-10zM9 7h1v2h-1zM3 8h2v1h-2zM2 9h2v1h-2zM5 9h10v1h-10zM0 10h2v1h-2zM3 10h1v5h-1zM8 10h1v1h-1zM12 10h1v2h-1zM7 11h1v1h-1zM8 12h1v1h-1zM11 12h1v1h-1zM9 13h2v1h-2zM1 14h1v1h-1zM7 14h2v1h-2zM11 14h2v1h-2zM2 15h1v1h-1zM5 15h2v1h-2zM13 15h1v1h-1zM20 0h1v9h-1zM25 0h1v3h-1zM17 2h1v8h-1zM24 3h1v1h-1zM24 4h7v1h-7zM23 5h1v1h-1zM28 5h1v4h-1zM22 6h1v1h-1zM24 6h1v3h-1zM19 9h2v1h-2zM25 9h1v2h-1zM27 9h1v2h-1zM17 10h2v1h-2zM20 10h1v6h-1zM17 11h1v1h-1zM26 11h1v1h-1zM25 12h1v1h-1zM27 12h1v1h-1zM24 13h1v1h-1zM28 13h1v1h-1zM23 14h1v1h-1zM29 14h1v1h-1zM22 15h1v1h-1zM30 15h1v1h-1z"/></svg><svg role="img" aria-label="频率" style="left:129px;top:280px;" width="32" height="18" viewBox="0 0 32 18" shape-rendering="crispEdges"><title>频率</title><path fill="#000" d="M3 0h1v3h-1zM7 1h8v1h-8zM1 2h1v4h-1zM10 2h1v1h-1zM3 3h3v1h-3zM9 3h1v1h-1zM3 4h1v2h-1zM7 4h7v1h-7zM7 5h1v1h-1zM13 5h1v7h-1zM0 6h8v1h-8zM10 6h1v5h-1zM7 7h1v5h-1zM3 8h1v4h-1zM1 9h1v3h-1zM5 9h1v4h-1zM9 11h1v2h-1zM0 12h1v1h-1zM11 12h1v1h-1zM4 13h1v1h-1zM8 13h1v1h-1zM12 13h1v1h-1zM2 14h2v1h-2zM7 14h1v1h-1zM13 14h1v1h-1zM0 15h2v1h-2zM6 15h1v1h-1zM14 15h1v1h-1zM22 0h1v1h-1zM23 1h1v1h-1zM17 2h13v1h-13zM22 3h1v1h-1zM17 4h1v1h-1zM21 4h1v1h-1zM25 4h1v1h-1zM29 4h1v1h-1zM18 5h1v1h-1zM20 5h5v1h-5zM28 5h1v1h-1zM19 6h1v1h-1zM23 6h1v1h-1zM27 6h1v1h-1zM18 7h1v1h-1zM22 7h1v1h-1zM25 7h1v1h-1zM28 7h1v1h-1zM17 8h1v1h-1zM20 8h7v1h-7zM29 8h1v1h-1zM26 9h1v1h-1zM23 10h1v1h-1zM16 11h15v1h-15zM23 12h1v4h-1z"/></svg><svg role="img" aria-label="累积" style="left:193px;top:280px;" width="32" height="18" viewBox="0 0 32 18" shape-rendering="crispEdges"><title>累积</title><path fill="#000" d="M2 1h11v1h-11zM2 2h1v1h-1zM7 2h1v1h-1zM12 2h1v1h-1zM2 3h11v1h-11zM2 4h1v1h-1zM7 4h1v1h-1zM12 4h1v1h-1zM2 5h11v1h-11zM6 6h1v1h-1zM5 7h1v1h-1zM10 7h1v1h-1zM3 8h7v1h-7zM7 9h2v1h-2zM5 10h2v1h-2zM11 10h1v1h-1zM2 11h11v1h-11zM7 12h1v3h-1zM12 12h1v1h-1zM3 13h1v1h-1zM10 13h1v1h-1zM2 14h1v1h-1zM5 14h1v1h-1zM11 14h1v1h-1zM1 15h1v1h-1zM6 15h1v1h-1zM12 15h1v1h-1zM21 0h1v1h-1zM20 1h3v1h-3zM17 2h4v1h-4zM24 2h6v1h-6zM20 3h1v2h-1zM24 3h1v2h-1zM29 3h1v5h-1zM16 5h9v1h-9zM20 6h1v1h-1zM24 6h1v2h-1zM19 7h2v1h-2zM19 8h3v1h-3zM24 8h6v1h-6zM18 9h1v2h-1zM20 9h1v7h-1zM22 9h1v2h-1zM24 9h1v1h-1zM29 9h1v1h-1zM17 11h1v1h-1zM25 11h1v2h-1zM28 11h1v1h-1zM16 12h1v1h-1zM29 12h1v2h-1zM24 13h1v2h-1zM30 14h1v2h-1zM23 15h1v1h-1z"/></svg><div class="n16" style="left:233px;top:282px"><i class="mc">%</i></div><div class="n16 r" style="left:37px;top:301px;width:69px">130</div><div class="n16 r" style="left:109px;top:301px;width:69px">6</div><div class="n16 r" style="left:181px;top:301px;width:69px">12<i class="mc">.</i>00<i class="mc">%</i></div><div class="n16 r" style="left:37px;top:320px;width:69px">160</div><div class="n16 r" style="left:109px;top:320px;width:69px">8</div><div class="n16 r" style="left:181px;top:320px;width:69px">28<i class="mc">.</i>00<i class="mc">%</i></div><div class="n16 r" style="left:37px;top:339px;width:69px">190</div><div class="n16 r" style="left:109px;top:339px;width:69px">12</div><div class="n16 r" style="left:181px;top:339px;width:69px">52<i class="mc">.</i>00<i class="mc">%</i></div><div class="n16 r" style="left:37px;top:358px;width:69px">220</div><div class="n16 r" style="left:109px;top:358px;width:69px">11</div><div class="n16 r" style="left:181px;top:358px;width:69px">74<i class="mc">.</i>00<i class="mc">%</i></div><div class="n16 r" style="left:37px;top:377px;width:69px">250</div><div class="n16 r" style="left:109px;top:377px;width:69px">7</div><div class="n16 r" style="left:181px;top:377px;width:69px">88<i class="mc">.</i>00<i class="mc">%</i></div><div class="n16 r" style="left:37px;top:396px;width:69px">280</div><div class="n16 r" style="left:109px;top:396px;width:69px">4</div><div class="n16 r" style="left:181px;top:396px;width:69px">96<i class="mc">.</i>00<i class="mc">%</i></div><div class="n16 r" style="left:37px;top:415px;width:69px">310</div><div class="n16 r" style="left:109px;top:415px;width:69px">2</div><div class="n16 r" style="left:181px;top:415px;width:69px">100<i class="mc">.</i>00<i class="mc">%</i></div><svg role="img" aria-label="其他" style="left:39px;top:433px;" width="32" height="18" viewBox="0 0 32 18" shape-rendering="crispEdges"><title>其他</title><path fill="#000" d="M4 0h1v2h-1zM10 0h1v2h-1zM1 2h13v1h-13zM4 3h1v2h-1zM10 3h1v2h-1zM4 5h7v1h-7zM4 6h1v2h-1zM10 6h1v2h-1zM4 8h7v1h-7zM4 9h1v2h-1zM10 9h1v2h-1zM0 11h15v1h-15zM4 13h1v1h-1zM10 13h1v1h-1zM3 14h1v1h-1zM11 14h1v1h-1zM2 15h1v1h-1zM12 15h1v1h-1zM20 0h1v3h-1zM25 0h1v4h-1zM22 2h1v4h-1zM19 3h1v2h-1zM27 3h2v1h-2zM25 4h2v1h-2zM28 4h1v6h-1zM18 5h2v2h-2zM24 5h2v1h-2zM22 6h2v1h-2zM25 6h1v6h-1zM17 7h1v1h-1zM19 7h4v1h-4zM16 8h1v1h-1zM19 8h1v8h-1zM22 8h1v6h-1zM27 10h2v1h-2zM30 11h1v3h-1zM23 14h8v1h-8z"/></svg><div class="n16 r" style="left:109px;top:435px;width:69px">0</div><div class="n16 r" style="left:181px;top:435px;width:69px">100<i class="mc">.</i>00<i class="mc">%</i></div><div style="left:324px;top:278px;width:433px;height:192px;background:#fff;border:1px solid #000"></div><svg style="left:0;top:0" width="800" height="576" viewBox="0 0 800 576" shape-rendering="crispEdges"><rect x="393.5" y="334.5" width="185" height="47" fill="#c0c0c0" stroke="#808080"/><rect x="400.5" y="362.5" width="8" height="19" fill="#9999ff" stroke="#000"/><rect x="423.5" y="356.5" width="8" height="25" fill="#9999ff" stroke="#000"/><rect x="446.5" y="343.5" width="8" height="38" fill="#9999ff" stroke="#000"/><rect x="469.5" y="347.5" width="8" height="34" fill="#9999ff" stroke="#000"/><rect x="492.5" y="359.5" width="8" height="22" fill="#9999ff" stroke="#000"/><rect x="515.5" y="368.5" width="8" height="13" fill="#9999ff" stroke="#000"/><rect x="538.5" y="375.5" width="8" height="6" fill="#9999ff" stroke="#000"/><path stroke="#000" fill="none" d="M393.5 334v48M393 381.5h186M578.5 334v48"/><path stroke="#000" d="M394 334.5h4M574 334.5h4M394 350.5h4M574 350.5h4M394 365.5h4M574 365.5h4M416.5 378v3M439.5 378v3M462.5 378v3M485.5 378v3M508.5 378v3M531.5 378v3M554.5 378v3"/><polyline fill="none" stroke="#f0f" stroke-width="1" shape-rendering="auto" points="404.5,377.2 427.5,372.2 450.5,364.7 473.5,357.8 496.5,353.4 519.5,350.9 542.5,349.7 565.5,349.7"/><path fill="#f0f" d="M402 374h6v6h-6zM425 369h6v6h-6zM448 362h6v6h-6zM471 355h6v6h-6zM494 350h6v6h-6zM517 348h6v6h-6zM540 347h6v6h-6zM563 347h6v6h-6z"/><rect x="659.5" y="336.5" width="88" height="42" fill="#fff" stroke="#000"/><rect x="665.5" y="344.5" width="26" height="9" fill="#9999ff" stroke="#000"/><path stroke="#f0f" d="M665 370.5h27"/><path fill="#f0f" d="M675 367h6v6h-6z"/></svg><svg role="img" aria-label="直方图" style="left:516px;top:292px;" width="48" height="18" viewBox="0 0 48 18" shape-rendering="crispEdges"><title>直方图</title><path fill="#000" d="M7 0h1v2h-1zM1 2h13v1h-13zM7 3h1v1h-1zM3 4h9v1h-9zM3 5h1v2h-1zM11 5h1v2h-1zM3 7h9v1h-9zM3 8h1v1h-1zM11 8h1v1h-1zM3 9h9v1h-9zM3 10h1v1h-1zM11 10h1v1h-1zM3 11h9v1h-9zM3 12h1v2h-1zM11 12h1v2h-1zM0 14h15v1h-15zM22 0h1v1h-1zM23 1h1v2h-1zM16 3h15v1h-15zM21 4h1v3h-1zM21 7h7v1h-7zM21 8h1v3h-1zM27 8h1v6h-1zM20 11h1v2h-1zM19 13h1v1h-1zM18 14h1v1h-1zM24 14h1v1h-1zM26 14h1v1h-1zM17 15h1v1h-1zM25 15h1v1h-1zM33 1h13v1h-13zM33 2h1v7h-1zM38 2h1v2h-1zM45 2h1v7h-1zM37 4h6v1h-6zM36 5h2v1h-2zM41 5h1v1h-1zM35 6h1v1h-1zM38 6h1v1h-1zM40 6h1v1h-1zM39 7h1v1h-1zM37 8h2v1h-2zM40 8h2v1h-2zM33 9h4v1h-4zM42 9h4v1h-4zM33 10h1v4h-1zM38 10h2v1h-2zM45 10h1v4h-1zM40 11h1v1h-1zM37 12h2v1h-2zM39 13h2v1h-2zM33 14h13v1h-13zM33 15h1v1h-1zM45 15h1v1h-1z"/></svg><svg role="img" aria-label="接收" style="left:469px;top:435px;" width="32" height="18" viewBox="0 0 32 18" shape-rendering="crispEdges"><title>接收</title><path fill="#000" d="M3 0h1v4h-1zM8 0h1v1h-1zM9 1h1v1h-1zM6 2h8v1h-8zM0 4h6v1h-6zM7 4h1v1h-1zM12 4h1v1h-1zM3 5h1v3h-1zM8 5h1v1h-1zM11 5h1v1h-1zM5 6h10v1h-10zM9 7h1v2h-1zM3 8h2v1h-2zM2 9h2v1h-2zM5 9h10v1h-10zM0 10h2v1h-2zM3 10h1v5h-1zM8 10h1v1h-1zM12 10h1v2h-1zM7 11h1v1h-1zM8 12h1v1h-1zM11 12h1v1h-1zM9 13h2v1h-2zM1 14h1v1h-1zM7 14h2v1h-2zM11 14h2v1h-2zM2 15h1v1h-1zM5 15h2v1h-2zM13 15h1v1h-1zM20 0h1v9h-1zM25 0h1v3h-1zM17 2h1v8h-1zM24 3h1v1h-1zM24 4h7v1h-7zM23 5h1v1h-1zM28 5h1v4h-1zM22 6h1v1h-1zM24 6h1v3h-1zM19 9h2v1h-2zM25 9h1v2h-1zM27 9h1v2h-1zM17 10h2v1h-2zM20 10h1v6h-1zM17 11h1v1h-1zM26 11h1v1h-1zM25 12h1v1h-1zM27 12h1v1h-1zM24 13h1v1h-1zM28 13h1v1h-1zM23 14h1v1h-1zM29 14h1v1h-1zM22 15h1v1h-1zM30 15h1v1h-1z"/></svg><svg role="img" aria-label="频率" style="left:342px;top:339px" width="18" height="36" viewBox="0 0 18 36" shape-rendering="crispEdges"><g transform="translate(0,34) rotate(-90)"><path d="M3 0h1v3h-1zM7 1h8v1h-8zM1 2h1v4h-1zM10 2h1v1h-1zM3 3h3v1h-3zM9 3h1v1h-1zM3 4h1v2h-1zM7 4h7v1h-7zM7 5h1v1h-1zM13 5h1v7h-1zM0 6h8v1h-8zM10 6h1v5h-1zM7 7h1v5h-1zM3 8h1v4h-1zM1 9h1v3h-1zM5 9h1v4h-1zM9 11h1v2h-1zM0 12h1v1h-1zM11 12h1v1h-1zM4 13h1v1h-1zM8 13h1v1h-1zM12 13h1v1h-1zM2 14h2v1h-2zM7 14h1v1h-1zM13 14h1v1h-1zM0 15h2v1h-2zM6 15h1v1h-1zM14 15h1v1h-1zM22 0h1v1h-1zM23 1h1v1h-1zM17 2h13v1h-13zM22 3h1v1h-1zM17 4h1v1h-1zM21 4h1v1h-1zM25 4h1v1h-1zM29 4h1v1h-1zM18 5h1v1h-1zM20 5h5v1h-5zM28 5h1v1h-1zM19 6h1v1h-1zM23 6h1v1h-1zM27 6h1v1h-1zM18 7h1v1h-1zM22 7h1v1h-1zM25 7h1v1h-1zM28 7h1v1h-1zM17 8h1v1h-1zM20 8h7v1h-7zM29 8h1v1h-1zM26 9h1v1h-1zM23 10h1v1h-1zM16 11h15v1h-15zM23 12h1v4h-1z"/></g></svg><div class="n16 r" style="left:340px;top:328px;width:41px">15</div><div class="n16 r" style="left:340px;top:344px;width:41px">10</div><div class="n16 r" style="left:340px;top:359px;width:41px">5</div><div class="n16 r" style="left:340px;top:375px;width:41px">0</div><div class="n16" style="left:589px;top:328px">150<i class="mc">.</i>00<i class="mc">%</i></div><div class="n16" style="left:589px;top:344px">100<i class="mc">.</i>00<i class="mc">%</i></div><div class="n16" style="left:589px;top:359px">50<i class="mc">.</i>00<i class="mc">%</i></div><div class="n16" style="left:589px;top:375px"><i class="mc">.</i>00<i class="mc">%</i></div><div class="n16 r" style="left:356px;top:394px;width:40px;font-size:15.5px;-webkit-text-stroke:.45px #000;transform:rotate(-45deg);transform-origin:100% 50%">130</div><div class="n16 r" style="left:379px;top:394px;width:40px;font-size:15.5px;-webkit-text-stroke:.45px #000;transform:rotate(-45deg);transform-origin:100% 50%">160</div><div class="n16 r" style="left:402px;top:394px;width:40px;font-size:15.5px;-webkit-text-stroke:.45px #000;transform:rotate(-45deg);transform-origin:100% 50%">190</div><div class="n16 r" style="left:425px;top:394px;width:40px;font-size:15.5px;-webkit-text-stroke:.45px #000;transform:rotate(-45deg);transform-origin:100% 50%">220</div><div class="n16 r" style="left:448px;top:394px;width:40px;font-size:15.5px;-webkit-text-stroke:.45px #000;transform:rotate(-45deg);transform-origin:100% 50%">250</div><div class="n16 r" style="left:471px;top:394px;width:40px;font-size:15.5px;-webkit-text-stroke:.45px #000;transform:rotate(-45deg);transform-origin:100% 50%">280</div><div class="n16 r" style="left:494px;top:394px;width:40px;font-size:15.5px;-webkit-text-stroke:.45px #000;transform:rotate(-45deg);transform-origin:100% 50%">310</div><svg role="img" aria-label="其他" style="left:525px;top:393px;transform:rotate(-45deg);transform-origin:100% 50%" width="32" height="18" viewBox="0 0 32 18"><path d="M4 0h1v2h-1zM10 0h1v2h-1zM1 2h13v1h-13zM4 3h1v2h-1zM10 3h1v2h-1zM4 5h7v1h-7zM4 6h1v2h-1zM10 6h1v2h-1zM4 8h7v1h-7zM4 9h1v2h-1zM10 9h1v2h-1zM0 11h15v1h-15zM4 13h1v1h-1zM10 13h1v1h-1zM3 14h1v1h-1zM11 14h1v1h-1zM2 15h1v1h-1zM12 15h1v1h-1zM20 0h1v3h-1zM25 0h1v4h-1zM22 2h1v4h-1zM19 3h1v2h-1zM27 3h2v1h-2zM25 4h2v1h-2zM28 4h1v6h-1zM18 5h2v2h-2zM24 5h2v1h-2zM22 6h2v1h-2zM25 6h1v6h-1zM17 7h1v1h-1zM19 7h4v1h-4zM16 8h1v1h-1zM19 8h1v8h-1zM22 8h1v6h-1zM27 10h2v1h-2zM30 11h1v3h-1zM23 14h8v1h-8z"/></svg><svg role="img" aria-label="频率" style="left:696px;top:340px;" width="32" height="18" viewBox="0 0 32 18" shape-rendering="crispEdges"><title>频率</title><path fill="#000" d="M3 0h1v3h-1zM7 1h8v1h-8zM1 2h1v4h-1zM10 2h1v1h-1zM3 3h3v1h-3zM9 3h1v1h-1zM3 4h1v2h-1zM7 4h7v1h-7zM7 5h1v1h-1zM13 5h1v7h-1zM0 6h8v1h-8zM10 6h1v5h-1zM7 7h1v5h-1zM3 8h1v4h-1zM1 9h1v3h-1zM5 9h1v4h-1zM9 11h1v2h-1zM0 12h1v1h-1zM11 12h1v1h-1zM4 13h1v1h-1zM8 13h1v1h-1zM12 13h1v1h-1zM2 14h2v1h-2zM7 14h1v1h-1zM13 14h1v1h-1zM0 15h2v1h-2zM6 15h1v1h-1zM14 15h1v1h-1zM22 0h1v1h-1zM23 1h1v1h-1zM17 2h13v1h-13zM22 3h1v1h-1zM17 4h1v1h-1zM21 4h1v1h-1zM25 4h1v1h-1zM29 4h1v1h-1zM18 5h1v1h-1zM20 5h5v1h-5zM28 5h1v1h-1zM19 6h1v1h-1zM23 6h1v1h-1zM27 6h1v1h-1zM18 7h1v1h-1zM22 7h1v1h-1zM25 7h1v1h-1zM28 7h1v1h-1zM17 8h1v1h-1zM20 8h7v1h-7zM29 8h1v1h-1zM26 9h1v1h-1zM23 10h1v1h-1zM16 11h15v1h-15zM23 12h1v4h-1z"/></svg><svg role="img" aria-label="累积" style="left:697px;top:361px;" width="32" height="18" viewBox="0 0 32 18" shape-rendering="crispEdges"><title>累积</title><path fill="#000" d="M2 1h11v1h-11zM2 2h1v1h-1zM7 2h1v1h-1zM12 2h1v1h-1zM2 3h11v1h-11zM2 4h1v1h-1zM7 4h1v1h-1zM12 4h1v1h-1zM2 5h11v1h-11zM6 6h1v1h-1zM5 7h1v1h-1zM10 7h1v1h-1zM3 8h7v1h-7zM7 9h2v1h-2zM5 10h2v1h-2zM11 10h1v1h-1zM2 11h11v1h-11zM7 12h1v3h-1zM12 12h1v1h-1zM3 13h1v1h-1zM10 13h1v1h-1zM2 14h1v1h-1zM5 14h1v1h-1zM11 14h1v1h-1zM1 15h1v1h-1zM6 15h1v1h-1zM12 15h1v1h-1zM21 0h1v1h-1zM20 1h3v1h-3zM17 2h4v1h-4zM24 2h6v1h-6zM20 3h1v2h-1zM24 3h1v2h-1zM29 3h1v5h-1zM16 5h9v1h-9zM20 6h1v1h-1zM24 6h1v2h-1zM19 7h2v1h-2zM19 8h3v1h-3zM24 8h6v1h-6zM18 9h1v2h-1zM20 9h1v7h-1zM22 9h1v2h-1zM24 9h1v1h-1zM29 9h1v1h-1zM17 11h1v1h-1zM25 11h1v2h-1zM28 11h1v1h-1zM16 12h1v1h-1zM29 12h1v2h-1zM24 13h1v2h-1zM30 14h1v2h-1zM23 15h1v1h-1z"/></svg><div class="n16" style="left:735px;top:363px"><i class="mc">%</i></div><div class="dith" style="left:781px;top:88px;width:17px;height:420px;"></div><div style="left:781px;top:88px;width:17px;height:5px;background:#c0c0c0;box-shadow:inset 1px 1px #fff,inset -1px 0 #808080"></div><div style="left:781px;top:93px;width:17px;height:1px;background:#000"></div><div style="left:781px;top:94px;width:17px;height:18px;background:#c0c0c0;box-shadow:inset 1px 1px #dfdfdf,inset -1px -1px #000,inset 2px 2px #fff,inset -2px -2px #808080"></div><svg style="left:786px;top:100px;" width="7" height="4" viewBox="0 0 7 4" shape-rendering="crispEdges"><path fill="#000" d="M3 0h1v1h-1zM2 1h3v1h-3zM1 2h5v1h-5zM0 3h7v1h-7z"/></svg><div style="left:781px;top:197px;width:17px;height:294px;background:#c0c0c0;box-shadow:inset 1px 1px #dfdfdf,inset -1px -1px #000,inset 2px 2px #fff,inset -2px -2px #808080"></div><div style="left:781px;top:491px;width:17px;height:18px;background:#c0c0c0;box-shadow:inset 1px 1px #dfdfdf,inset -1px -1px #000,inset 2px 2px #fff,inset -2px -2px #808080"></div><svg style="left:786px;top:499px;" width="7" height="4" viewBox="0 0 7 4" shape-rendering="crispEdges"><path fill="#000" d="M0 0h7v1h-7zM1 1h5v1h-5zM2 2h3v1h-3zM3 3h1v1h-1z"/></svg><div style="left:798px;top:66px;width:2px;height:460px;background:#fff"></div><div style="left:2px;top:508px;width:798px;height:17px;background:#c0c0c0"></div><div style="left:781px;top:508px;width:17px;height:17px;background:#c0c0c0;border-left:1px solid #000;border-top:1px solid #000"></div><div style="left:0px;top:525px;width:800px;height:1px;background:#fff"></div><div style="left:2px;top:509px;width:17px;height:15px;background:#c0c0c0;box-shadow:inset 1px 1px #fff,inset -1px -1px #808080"></div><svg style="left:2px;top:513px;" width="17" height="9" viewBox="0 0 17 9" shape-rendering="crispEdges"><path fill="#000" d="M3 0h2v9h-2zM6 4h1v1h-1zM7 3h1v3h-1zM8 2h1v5h-1zM9 1h1v7h-1zM10 0h1v9h-1z"/></svg><div style="left:19px;top:509px;width:17px;height:15px;background:#c0c0c0;box-shadow:inset 1px 1px #fff,inset -1px -1px #808080"></div><svg style="left:19px;top:513px;" width="17" height="9" viewBox="0 0 17 9" shape-rendering="crispEdges"><path fill="#000" d="M5 4h1v1h-1zM6 3h1v3h-1zM7 2h1v5h-1zM8 1h1v7h-1zM9 0h1v9h-1z"/></svg><div style="left:36px;top:509px;width:17px;height:15px;background:#c0c0c0;box-shadow:inset 1px 1px #fff,inset -1px -1px #808080"></div><svg style="left:36px;top:513px;" width="17" height="9" viewBox="0 0 17 9" shape-rendering="crispEdges"><path fill="#000" d="M9 4h1v1h-1zM8 3h1v3h-1zM7 2h1v5h-1zM6 1h1v7h-1zM5 0h1v9h-1z"/></svg><div style="left:53px;top:509px;width:17px;height:15px;background:#c0c0c0;box-shadow:inset 1px 1px #fff,inset -1px -1px #808080"></div><svg style="left:53px;top:513px;" width="17" height="9" viewBox="0 0 17 9" shape-rendering="crispEdges"><path fill="#000" d="M8 4h1v1h-1zM7 3h1v3h-1zM6 2h1v5h-1zM5 1h1v7h-1zM4 0h1v9h-1zM10 0h2v9h-2z"/></svg><svg style="left:68px;top:507px;" width="200" height="18" viewBox="0 0 200 18" shape-rendering="crispEdges"><g shape-rendering="auto"><path d="M3.500 0l7 16h51.500l7-16z" fill="#fff"/><path d="M3.500 .5l7 15.500h51.500l7-15.500M123.500 16l7-15.500M182.500 16l7-15.500M62 16l-1.500-3M123.500 16l-1.500-3" fill="none" stroke="#000"/></g><path d="M11 15h51v1h-51z" fill="#000"/></svg><div class="m16" style="left:79.5px;top:509px;letter-spacing:-.2px">Sheet1</div><div class="m16" style="left:139.5px;top:509px;letter-spacing:-.2px">Sheet2</div><div class="m16" style="left:199.5px;top:509px;letter-spacing:-.2px">Sheet3</div><div style="left:471px;top:509px;width:4px;height:16px;background:#c0c0c0;box-shadow:inset 1px 0 #fff,inset -1px 0 #000"></div><div class="dith" style="left:475px;top:508px;width:284px;height:17px;"></div><div style="left:475px;top:508px;width:17px;height:17px;background:#c0c0c0;box-shadow:inset 1px 1px #dfdfdf,inset -1px -1px #000,inset 2px 2px #fff,inset -2px -2px #808080"></div><svg style="left:481px;top:513px;" width="4" height="7" viewBox="0 0 4 7" shape-rendering="crispEdges"><path fill="#000" d="M3 0h1v7h-1zM2 1h1v5h-1zM1 2h1v3h-1zM0 3h1v1h-1z"/></svg><div style="left:492px;top:508px;width:242px;height:17px;background:#c0c0c0;box-shadow:inset 1px 1px #dfdfdf,inset -1px -1px #000,inset 2px 2px #fff,inset -2px -2px #808080"></div><div style="left:759px;top:508px;width:17px;height:17px;background:#c0c0c0;box-shadow:inset 1px 1px #dfdfdf,inset -1px -1px #000,inset 2px 2px #fff,inset -2px -2px #808080"></div><svg style="left:766px;top:513px;" width="4" height="7" viewBox="0 0 4 7" shape-rendering="crispEdges"><path fill="#000" d="M0 0h1v7h-1zM1 1h1v5h-1zM2 2h1v3h-1zM3 3h1v1h-1z"/></svg><div style="left:776px;top:508px;width:5px;height:17px;background:#c0c0c0;box-shadow:inset 1px 0 #000,inset 2px 0 #fff"></div><div style="left:0px;top:527px;width:624px;height:26px;background:#c0c0c0;box-shadow:inset 1px 1px #fff,inset -1px -1px #808080"></div><div class="grip" style="left:3px;top:529px;width:3px;height:21px;"></div><svg role="img" aria-label="绘图" style="left:12px;top:535px;" width="24" height="14" viewBox="0 0 24 14" shape-rendering="crispEdges"><title>绘图</title><path fill="#000" d="M2 0h1v2h-1zM7 0h1v2h-1zM1 2h1v2h-1zM6 2h1v1h-1zM8 2h1v1h-1zM3 3h1v1h-1zM5 3h1v1h-1zM9 3h1v1h-1zM0 4h3v1h-3zM4 4h1v1h-1zM6 4h3v1h-3zM10 4h1v1h-1zM2 5h1v1h-1zM1 6h1v1h-1zM3 6h1v1h-1zM5 6h6v1h-6zM0 7h3v1h-3zM7 7h1v1h-1zM3 8h1v1h-1zM6 8h1v1h-1zM9 8h1v2h-1zM2 9h1v1h-1zM5 9h1v1h-1zM0 10h2v1h-2zM5 10h4v1h-4zM10 10h1v1h-1zM13 0h10v1h-10zM13 1h1v3h-1zM16 1h1v1h-1zM22 1h1v5h-1zM16 2h5v1h-5zM15 3h2v1h-2zM19 3h1v1h-1zM13 4h2v1h-2zM17 4h2v1h-2zM13 5h1v1h-1zM16 5h1v1h-1zM19 5h1v1h-1zM13 6h3v1h-3zM17 6h1v1h-1zM20 6h3v1h-3zM13 7h1v3h-1zM18 7h1v1h-1zM22 7h1v3h-1zM17 8h1v1h-1zM18 9h1v1h-1zM13 10h10v1h-10z"/></svg><div class="m12" style="left:38px;top:534px">(<u>R</u>)</div><svg style="left:59px;top:541px;" width="5" height="3" viewBox="0 0 5 3" shape-rendering="crispEdges"><path fill="#000" d="M0 0h5v1h-5zM1 1h3v1h-3zM2 2h1v1h-1z"/></svg><svg style="left:75px;top:533px;" width="10" height="15" viewBox="0 0 10 15"><path d="M.5 .5v11l2.500-2.500 2 4.500 1.800-.8-2-4.400h3.700z" fill="#fff" stroke="#000" stroke-linejoin="miter"/></svg><svg style="left:94px;top:532px;" width="16" height="16" viewBox="0 0 16 16"><g transform="translate(1,1)"><path d="M11.600 8.500A4.800 4.800 0 1 1 6.500 3" fill="none" stroke="#fff" stroke-width="2.600"/><path d="M5.500 0l5 3.200-5 3.300z" fill="#fff"/><circle cx="7" cy="8" r="1.600" fill="#fff"/></g><g transform="translate(0,0)"><path d="M11.600 8.500A4.800 4.800 0 1 1 6.500 3" fill="none" stroke="#808080" stroke-width="2.600"/><path d="M5.500 0l5 3.200-5 3.300z" fill="#808080"/><circle cx="7" cy="8" r="1.600" fill="#808080"/></g></svg><div style="left:116px;top:531px;width:1px;height:19px;background:#808080"></div><div style="left:117px;top:531px;width:1px;height:19px;background:#fff"></div><svg role="img" aria-label="自选图形" style="left:126px;top:535px;" width="48" height="14" viewBox="0 0 48 14" shape-rendering="crispEdges"><title>自选图形</title><path fill="#000" d="M4 0h1v1h-1zM2 1h7v1h-7zM2 2h1v2h-1zM8 2h1v2h-1zM2 4h7v1h-7zM2 5h1v1h-1zM8 5h1v1h-1zM2 6h7v1h-7zM2 7h1v2h-1zM8 7h1v2h-1zM2 9h7v1h-7zM2 10h1v1h-1zM8 10h1v1h-1zM13 0h1v1h-1zM17 0h1v2h-1zM19 0h1v2h-1zM14 1h1v2h-1zM17 2h5v1h-5zM16 3h1v1h-1zM19 3h1v1h-1zM12 4h3v1h-3zM16 4h7v1h-7zM14 5h1v4h-1zM18 5h1v2h-1zM20 5h1v3h-1zM22 6h1v2h-1zM17 7h1v1h-1zM16 8h1v1h-1zM21 8h2v1h-2zM13 9h1v1h-1zM15 9h1v1h-1zM12 10h1v1h-1zM16 10h7v1h-7zM25 0h10v1h-10zM25 1h1v3h-1zM28 1h1v1h-1zM34 1h1v5h-1zM28 2h5v1h-5zM27 3h2v1h-2zM31 3h1v1h-1zM25 4h2v1h-2zM29 4h2v1h-2zM25 5h1v1h-1zM28 5h1v1h-1zM31 5h1v1h-1zM25 6h3v1h-3zM29 6h1v1h-1zM32 6h3v1h-3zM25 7h1v3h-1zM30 7h1v1h-1zM34 7h1v3h-1zM29 8h1v1h-1zM30 9h1v1h-1zM25 10h10v1h-10zM37 0h6v1h-6zM46 0h1v1h-1zM38 1h1v3h-1zM41 1h1v3h-1zM45 1h1v1h-1zM44 2h1v1h-1zM46 3h1v1h-1zM36 4h7v1h-7zM45 4h1v1h-1zM38 5h1v4h-1zM41 5h1v5h-1zM44 5h1v1h-1zM43 6h1v1h-1zM46 7h1v1h-1zM45 8h1v1h-1zM37 9h1v1h-1zM44 9h1v1h-1zM36 10h1v1h-1zM41 10h3v1h-3z"/></svg><div class="m12" style="left:176px;top:534px">(<u>U</u>)</div><svg style="left:195px;top:541px;" width="5" height="3" viewBox="0 0 5 3" shape-rendering="crispEdges"><path fill="#000" d="M0 0h5v1h-5zM1 1h3v1h-3zM2 2h1v1h-1z"/></svg><svg style="left:209px;top:534px;" width="13" height="12" viewBox="0 0 13 12"><path d="M.5 .5l12 11" stroke="#000" fill="none"/></svg><svg style="left:233px;top:534px;" width="13" height="12" viewBox="0 0 13 12"><path d="M.5 .5l9 8.500" stroke="#000" fill="none"/><path d="M12.500 11.500l-6-2 4-4z" fill="#000"/></svg><svg style="left:254px;top:534px;" width="16" height="13" viewBox="0 0 16 13" shape-rendering="crispEdges"><rect x=".5" y=".5" width="15" height="12" fill="none" stroke="#000"/></svg><svg style="left:277px;top:534px;" width="16" height="12" viewBox="0 0 16 12"><ellipse cx="8" cy="6" rx="7.500" ry="5.500" fill="none" stroke="#000"/></svg><svg style="left:300px;top:533px;" width="16" height="15" viewBox="0 0 16 15" shape-rendering="crispEdges"><rect x="0" y="0" width="16" height="15" fill="#000"/><rect x="1" y="1" width="13" height="12" fill="#fff"/><path fill="#000" d="M3 8h10v1h-10zM3 10h10v1h-10zM3 6h10v1h-10zM5 2h1v1h-1zM4 3h3v1h-3zM3 4h5v1h-5zM9 2h4v1h-4zM9 4h4v1h-4z"/></svg><svg style="left:323px;top:533px;" width="16" height="15" viewBox="0 0 16 15" shape-rendering="crispEdges"><rect x="0" y="0" width="16" height="15" fill="#000"/><rect x="1" y="1" width="13" height="12" fill="#fff"/><path fill="#000" d="M3 2h1v10h-1zM5 2h1v10h-1zM8 7h1v5h-1zM10 7h1v5h-1zM12 7h1v5h-1zM10 2h1v1h-1zM9 3h3v1h-3zM8 4h5v1h-5z"/></svg><svg style="left:346px;top:533px;" width="17" height="16" viewBox="0 0 17 16"><path d="M1 11.500L11 1.500h2.500v12.500h-4v-3.500h-3l-2 2.500z" fill="#808080" transform="translate(1.200,.8)"/><path d="M1 11.500L11 1.500h2.500v12h-4v-3.500h-3l-2 2.500zM7.800 8h2v-3z" fill="#0000c0" fill-rule="evenodd"/><path d="M15.500 .5v12.500" stroke="#000" fill="none"/></svg><svg style="left:370px;top:533px;" width="16" height="16" viewBox="0 0 16 16" shape-rendering="crispEdges"><rect x="1" y="1" width="14" height="14" fill="#fff"/><path fill="#000" d="M0 0h1v1h-1zM2 0h1v1h-1zM4 0h1v1h-1zM6 0h1v1h-1zM8 0h1v1h-1zM10 0h1v1h-1zM12 0h1v1h-1zM14 0h1v1h-1zM1 15h1v1h-1zM3 15h1v1h-1zM5 15h1v1h-1zM7 15h1v1h-1zM9 15h1v1h-1zM11 15h1v1h-1zM13 15h1v1h-1zM15 15h1v1h-1zM0 0h1v1h-1zM0 2h1v1h-1zM0 4h1v1h-1zM0 6h1v1h-1zM0 8h1v1h-1zM0 10h1v1h-1zM0 12h1v1h-1zM0 14h1v1h-1zM15 1h1v1h-1zM15 3h1v1h-1zM15 5h1v1h-1zM15 7h1v1h-1zM15 9h1v1h-1zM15 11h1v1h-1zM15 13h1v1h-1zM15 15h1v1h-1z"/><g shape-rendering="auto"><path d="M5 3.500c1-2.500 6-2.500 6.500 .5l-1 2.500h-5z" fill="#a00000"/><circle cx="8" cy="6.500" r="2.300" fill="#ffe080"/><path d="M4 14.500c0-3 1.500-5 4-5s4 2 4 5z" fill="#800080"/><path d="M7 9h2l-1 3z" fill="#fff"/><path d="M6.500 6h1M8.800 6h1" stroke="#000" stroke-width=".8"/></g></svg><div style="left:392px;top:531px;width:1px;height:19px;background:#808080"></div><div style="left:393px;top:531px;width:1px;height:19px;background:#fff"></div><svg style="left:399px;top:533px;" width="16" height="12" viewBox="0 0 16 12"><path d="M5.5 3.5l5 4-4 4.5-5-4z" fill="#fff" stroke="#000"/><path d="M7.5 .5c-2 0-2.500 2-2.500 3.500" fill="none" stroke="#000"/><path d="M10.5 4.500c2.500-.5 4 1 3.500 5-1-2-2-3-3.500-2.500z" fill="#000080" stroke="#000080" stroke-width=".6"/></svg><div style="left:399px;top:545px;width:16px;height:4px;background:#ff0"></div><svg style="left:420px;top:540px;" width="5" height="3" viewBox="0 0 5 3" shape-rendering="crispEdges"><path fill="#000" d="M0 0h5v1h-5zM1 1h3v1h-3zM2 2h1v1h-1z"/></svg><svg style="left:432px;top:533px;" width="17" height="12" viewBox="0 0 17 12"><path d="M14.500 .5l1.500 1.500-6.500 7-2-1.500z" fill="#ff0" stroke="#000" stroke-width=".8"/><path d="M7.500 7.500l2 1.500c-1.500 2.500-4 2.500-7 2 2-1 2.500-3 5-3.500z" fill="#000080"/></svg><div style="left:432px;top:545px;width:16px;height:4px;background:#00f"></div><svg style="left:454px;top:540px;" width="5" height="3" viewBox="0 0 5 3" shape-rendering="crispEdges"><path fill="#000" d="M0 0h5v1h-5zM1 1h3v1h-3zM2 2h1v1h-1z"/></svg><div style="left:464px;top:530px;width:18px;text-align:center;color:#000080;font:bold 17px/18px 'Liberation Serif',serif;transform:scaleX(1.25)">A</div><div style="left:466px;top:545px;width:16px;height:4px;background:#f00"></div><svg style="left:488px;top:540px;" width="5" height="3" viewBox="0 0 5 3" shape-rendering="crispEdges"><path fill="#000" d="M0 0h5v1h-5zM1 1h3v1h-3zM2 2h1v1h-1z"/></svg><svg style="left:500px;top:535px;" width="16" height="11" viewBox="0 0 16 11" shape-rendering="crispEdges"><path fill="#000" d="M0 0h16v2h-16zM0 3h16v3h-16zM0 7h16v3h-16z"/></svg><svg style="left:523px;top:535px;" width="16" height="11" viewBox="0 0 16 11" shape-rendering="crispEdges"><path fill="#000" d="M0 0h16v1h-16zM0 3h2v1h-2zM3 3h2v1h-2zM6 3h2v1h-2zM9 3h2v1h-2zM12 3h2v1h-2zM15 3h2v1h-2zM0 6h3v1h-3zM4 6h3v1h-3zM8 6h3v1h-3zM12 6h3v1h-3zM0 9h1v1h-1zM2 9h1v1h-1zM4 9h1v1h-1zM6 9h1v1h-1zM8 9h1v1h-1zM10 9h1v1h-1zM12 9h1v1h-1zM14 9h1v1h-1z"/></svg><svg style="left:546px;top:533px;" width="17" height="15" viewBox="0 0 17 15" shape-rendering="crispEdges"><path fill="#000" d="M1 2h14v1h-14zM12 0h1v5h-1zM13 1h1v3h-1zM14 2h2v1h-2zM15 2h1v1h-1zM2 7h14v1h-14zM4 5h1v5h-1zM3 6h1v3h-1zM1 7h1v1h-1zM1 12h15v1h-15zM4 10h1v5h-1zM3 11h1v3h-1zM12 10h1v5h-1zM13 11h1v3h-1z"/></svg><svg style="left:570px;top:533px;" width="15" height="15" viewBox="0 0 15 15" shape-rendering="crispEdges"><defs><pattern id="bd" width="2" height="2" patternUnits="userSpaceOnUse"><rect width="1" height="1" fill="#000"/><rect x="1" y="1" width="1" height="1" fill="#000"/></pattern></defs><rect x="3" y="3" width="12" height="12" fill="url(#bd)"/><rect x="1.500" y="1.500" width="10" height="10" fill="#008080" stroke="#000"/></svg><svg style="left:591px;top:533px;" width="18" height="17" viewBox="0 0 18 17"><path d="M2.500 6.500l5-5h9.500v9.500l-5 5z" fill="#c0c0c0" stroke="#808080"/><path d="M2.500 6.500l5-5h9.500l-5 5z" fill="#fff" stroke="#808080"/><path d="M2.500 6.500h9.500v9.500h-9.500z" fill="#008080" stroke="#000"/></svg><svg style="left:615px;top:544px;" width="5" height="3" viewBox="0 0 5 3" shape-rendering="crispEdges"><path fill="#000" d="M0 0h5v1h-5zM1 1h3v1h-3zM2 2h1v1h-1z"/></svg><div style="left:0px;top:553px;width:800px;height:1px;background:#fff"></div><div style="left:0px;top:572px;width:800px;height:1px;background:#fff"></div><div style="left:460px;top:556px;width:1px;height:15px;background:#808080"></div><div style="left:461px;top:556px;width:1px;height:15px;background:#fff"></div><div class="sunk" style="left:473px;top:557px;width:34px;height:14px;"></div><div class="sunk" style="left:511px;top:557px;width:112px;height:14px;"></div><div class="sunk" style="left:627px;top:557px;width:22px;height:14px;"></div><div class="sunk" style="left:653px;top:557px;width:28px;height:14px;"></div><div class="sunk" style="left:685px;top:557px;width:22px;height:14px;"></div><div class="sunk" style="left:711px;top:557px;width:28px;height:14px;"></div><div class="sunk" style="left:743px;top:557px;width:22px;height:14px;"></div><div class="sunk" style="left:769px;top:557px;width:22px;height:14px;"></div><svg role="img" aria-label="求和" style="left:512px;top:559px;" width="24" height="14" viewBox="0 0 24 14" shape-rendering="crispEdges"><title>求和</title><path fill="#000" d="M5 0h1v2h-1zM8 0h1v1h-1zM9 1h1v1h-1zM0 2h11v1h-11zM5 3h1v3h-1zM2 4h1v1h-1zM8 4h1v1h-1zM3 5h1v1h-1zM7 5h1v1h-1zM4 6h3v1h-3zM3 7h1v1h-1zM5 7h1v3h-1zM7 7h1v1h-1zM2 8h1v1h-1zM8 8h1v1h-1zM0 9h2v1h-2zM9 9h2v1h-2zM4 10h2v1h-2zM16 0h2v1h-2zM13 1h3v1h-3zM15 2h1v1h-1zM19 2h4v1h-4zM12 3h6v1h-6zM19 3h1v6h-1zM22 3h1v6h-1zM15 4h1v1h-1zM14 5h3v1h-3zM14 6h2v1h-2zM17 6h1v2h-1zM13 7h1v1h-1zM15 7h1v4h-1zM12 8h1v1h-1zM19 9h4v1h-4z"/></svg><div class="n12" style="left:536px;top:559px"><i class="mc">=</i>1595<i class="mc">.</i>5</div><div class="m12 b" style="left:686.5px;top:559px">NUM</div><div style="left:2px;top:546px;width:142px;height:26px;background:#c0c0c0;box-shadow:inset 0 1px #000,inset 1px 0 #fff,inset 2px 2px #fff,inset -1px -1px #000,inset -2px -2px #808080"></div><div style="left:5px;top:549px;width:20px;height:20px;background:#c0c0c0;box-shadow:inset 1px 1px #fff,inset -1px -1px #000,inset -2px -2px #808080"></div><div style="left:26px;top:549px;width:55px;height:20px;background:#c0c0c0;box-shadow:inset 1px 1px #fff,inset -1px -1px #000,inset -2px -2px #808080"></div><div style="left:82px;top:549px;width:19px;height:20px;background:#c0c0c0;box-shadow:inset 1px 1px #fff,inset -1px -1px #000,inset -2px -2px #808080"></div><div style="left:102px;top:549px;width:19px;height:20px;background:#c0c0c0;box-shadow:inset 1px 1px #fff,inset -1px -1px #000,inset -2px -2px #808080"></div><div style="left:122px;top:549px;width:19px;height:20px;background:#c0c0c0;box-shadow:inset 1px 1px #fff,inset -1px -1px #000,inset -2px -2px #808080"></div><svg role="img" aria-label="五笔型" style="left:29px;top:551px;" width="48" height="18" viewBox="0 0 48 18" shape-rendering="crispEdges"><title>五笔型</title><path fill="#000" d="M1 1h13v1h-13zM6 2h1v4h-1zM2 6h10v1h-10zM5 7h1v4h-1zM11 7h1v7h-1zM4 11h1v3h-1zM0 14h15v1h-15zM19 0h1v2h-1zM25 0h1v2h-1zM18 2h6v1h-6zM25 2h6v1h-6zM17 3h1v1h-1zM20 3h1v1h-1zM24 3h1v1h-1zM27 3h1v1h-1zM16 4h1v1h-1zM21 4h1v1h-1zM23 4h1v1h-1zM28 4h1v1h-1zM24 5h5v1h-5zM18 6h6v1h-6zM23 7h1v1h-1zM23 8h6v1h-6zM18 9h6v1h-6zM23 10h1v1h-1zM23 11h7v1h-7zM17 12h7v1h-7zM30 12h1v3h-1zM23 13h1v2h-1zM24 15h7v1h-7zM45 0h1v9h-1zM33 1h8v1h-8zM35 2h1v3h-1zM38 2h1v3h-1zM42 2h1v5h-1zM32 5h9v1h-9zM35 6h1v1h-1zM38 6h1v3h-1zM34 7h1v2h-1zM43 8h1v1h-1zM33 9h1v1h-1zM39 9h1v2h-1zM44 9h1v1h-1zM32 10h1v1h-1zM34 11h11v1h-11zM39 12h1v2h-1zM32 14h15v1h-15z"/></svg><svg style="left:7px;top:551px;" width="17" height="16" viewBox="0 0 17 16"><path d="M6 2c2-1 4-1 5 0s3 1 5 0v11c-2 1-4 1-5 0s-3-1-5 0z" fill="#000"/><rect x="7" y="3" width="3" height="4" fill="#f00"/><rect x="11" y="3" width="3" height="4" fill="#0c0"/><rect x="7" y="8" width="3" height="4" fill="#00f"/><rect x="11" y="8" width="3" height="4" fill="#ff0"/><path fill="#f00" d="M0 4h4v1h-4zM1 6h3v1h-3zM0 8h4v1h-4z"/><path fill="#00f" d="M0 10h4v1h-4zM1 12h3v1h-3z"/></svg><svg style="left:84px;top:551px;" width="14" height="15" viewBox="0 0 14 15"><path d="M8.500 1A6.800 6.800 0 1 1 .3 9.500A6 6 0 0 0 8.500 1z" fill="#000"/></svg><svg style="left:105px;top:556px;" width="13" height="8" viewBox="0 0 13 8" shape-rendering="crispEdges"><rect x="1.500" y="1.500" width="3" height="3" fill="none" stroke="#000"/><path d="M9 1h3v3l-1.500 2.500h-1l1-2.500h-1.500z" fill="#000"/></svg><svg style="left:123px;top:552px;" width="17" height="14" viewBox="0 0 17 14" shape-rendering="crispEdges"><rect x="0" y="0" width="17" height="14" fill="#808080"/><path fill="#dcdcdc" d="M1 2h3v2h-3zM5 2h3v2h-3zM9 2h3v2h-3zM13 2h3v2h-3zM2 5h3v2h-3zM6 5h3v2h-3zM10 5h3v2h-3zM14 5h2v2h-2zM1 8h3v2h-3zM5 8h3v2h-3zM9 8h3v2h-3zM13 8h3v2h-3zM3 11h11v2h-11z"/></svg></body></html>
